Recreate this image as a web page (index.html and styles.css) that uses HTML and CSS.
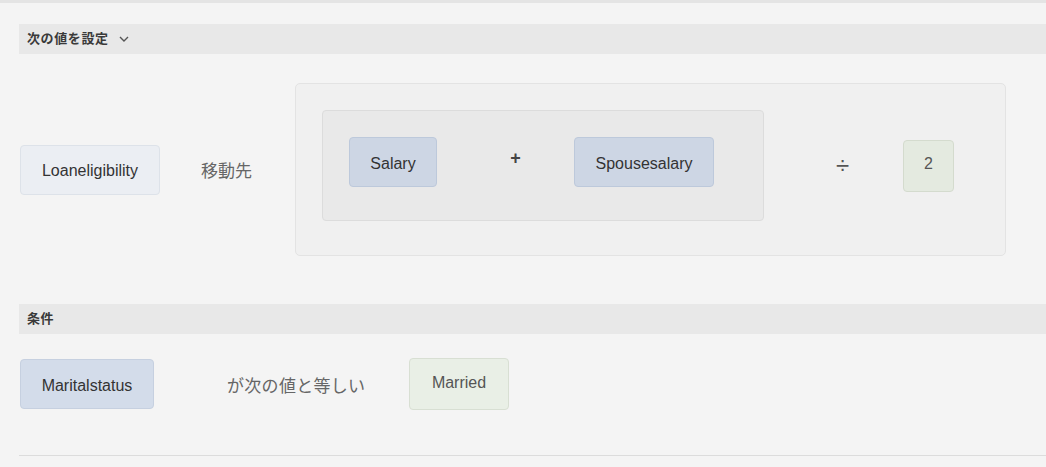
FILE: index.html
```html
<!DOCTYPE html>
<html lang="ja">
<head>
<meta charset="utf-8">
<title>Rule</title>
<link rel="stylesheet" href="styles.css">
</head>
<body>
<div class="topbar"></div>
<div class="page">
  <div class="section-head">
    <span class="section-title">次の値を設定</span>
    <svg class="chevron" width="10" height="6" viewBox="0 0 10 6"><path d="M1 1 L5 5 L9 1" fill="none" stroke="#555" stroke-width="1.4"/></svg>
  </div>

  <div class="row row-set">
    <div class="token token-loan">Loaneligibility</div>
    <div class="label label-move">移動先</div>
    <div class="expr">
      <div class="group">
        <div class="token token-field token-salary">Salary</div>
        <span class="op op-plus">+</span>
        <div class="token token-field token-spouse">Spousesalary</div>
      </div>
      <span class="op op-div">÷</span>
      <div class="token token-value token-two">2</div>
    </div>
  </div>

  <div class="section-head section-cond">
    <span class="section-title">条件</span>
  </div>

  <div class="row row-cond">
    <div class="token token-marital">Maritalstatus</div>
    <div class="label label-eq">が次の値と等しい</div>
    <div class="token token-value token-married">Married</div>
  </div>

  <div class="divider"></div>
</div>
</body>
</html>
```

FILE: styles.css
```css
* { box-sizing: border-box; }

html, body {
  margin: 0;
  padding: 0;
  background: #f4f4f4;
  font-family: "Liberation Sans", Arial, "Noto Sans CJK JP", sans-serif;
  color: #333;
}

.topbar {
  height: 3px;
  background: #e4e4e4;
}

.page {
  padding: 21px 0 0 19px;
}

.section-head {
  height: 30px;
  background: #e8e8e8;
  display: flex;
  align-items: center;
  padding-left: 8px;
  padding-bottom: 4px;
}

.section-title {
  font-family: "Noto Sans CJK JP", sans-serif;
  font-size: 13px;
  font-weight: 700;
  letter-spacing: 0.6px;
  color: #3a3a3a;
  line-height: 1;
}

.chevron {
  margin-left: 10px;
  margin-top: 3px;
}

.row {
  display: flex;
  align-items: center;
}

.row-set {
  margin-top: 29px;
}

.token {
  display: flex;
  align-items: center;
  justify-content: center;
  height: 50px;
  border-radius: 4px;
  border: 1px solid #dde2e9;
  font-size: 16px;
  color: #333;
  flex: none;
  padding-top: 2px;
}

.token-loan {
  margin-left: 1px;
  width: 140px;
  background: #ebeef3;
}

.label {
  font-family: "Noto Sans CJK JP", sans-serif;
  font-size: 17px;
  color: #666;
  white-space: nowrap;
  flex: none;
}

.label-move {
  margin-left: 41px;
  width: 53px;
}

.expr {
  margin-left: 41px;
  width: 711px;
  height: 173px;
  background: #f0f0f0;
  border: 1px solid #e3e3e3;
  border-radius: 5px;
  padding: 26px 0 34px 26px;
  display: flex;
  align-items: center;
  flex: none;
}

.group {
  width: 442px;
  height: 111px;
  background: #e9e9e9;
  border: 1px solid #dcdcdc;
  border-radius: 4px;
  padding: 26px;
  display: flex;
  align-items: flex-start;
  flex: none;
}

.token-field {
  background: #cdd6e4;
  border-color: #bdc9db;
  padding-top: 3px;
}

.token-salary {
  width: 88px;
}

.token-spouse {
  width: 140px;
  margin-left: 53px;
}

.op {
  flex: none;
  color: #444;
}

.op-plus {
  margin-left: 73px;
  width: 11px;
  font-size: 18px;
  font-weight: 700;
  line-height: 42px;
  text-align: center;
}

.op-div {
  margin-left: 71px;
  width: 15px;
  font-size: 24px;
  line-height: 1;
  text-align: center;
  color: #555;
}

.token-value {
  background: #e4eae0;
  border-color: #d4dbce;
  color: #555;
  padding-top: 0;
  padding-bottom: 3px;
}

.token-two {
  margin-left: 53px;
  width: 51px;
  height: 52px;
}

.section-cond {
  margin-top: 48px;
}

.row-cond {
  margin-top: 24px;
}

.token-marital {
  margin-left: 1px;
  width: 134px;
  background: #d3dcea;
  border-color: #c6d0e0;
  padding-top: 3px;
}

.label-eq {
  margin-left: 73px;
  width: 137px;
  letter-spacing: 0.3px;
}

.token-married {
  margin-left: 45px;
  width: 100px;
  height: 52px;
  background: #e9efe6;
  border-color: #d8dfd3;
}

.divider {
  margin-top: 45px;
  height: 1px;
  background: #dcdcdc;
}
```
